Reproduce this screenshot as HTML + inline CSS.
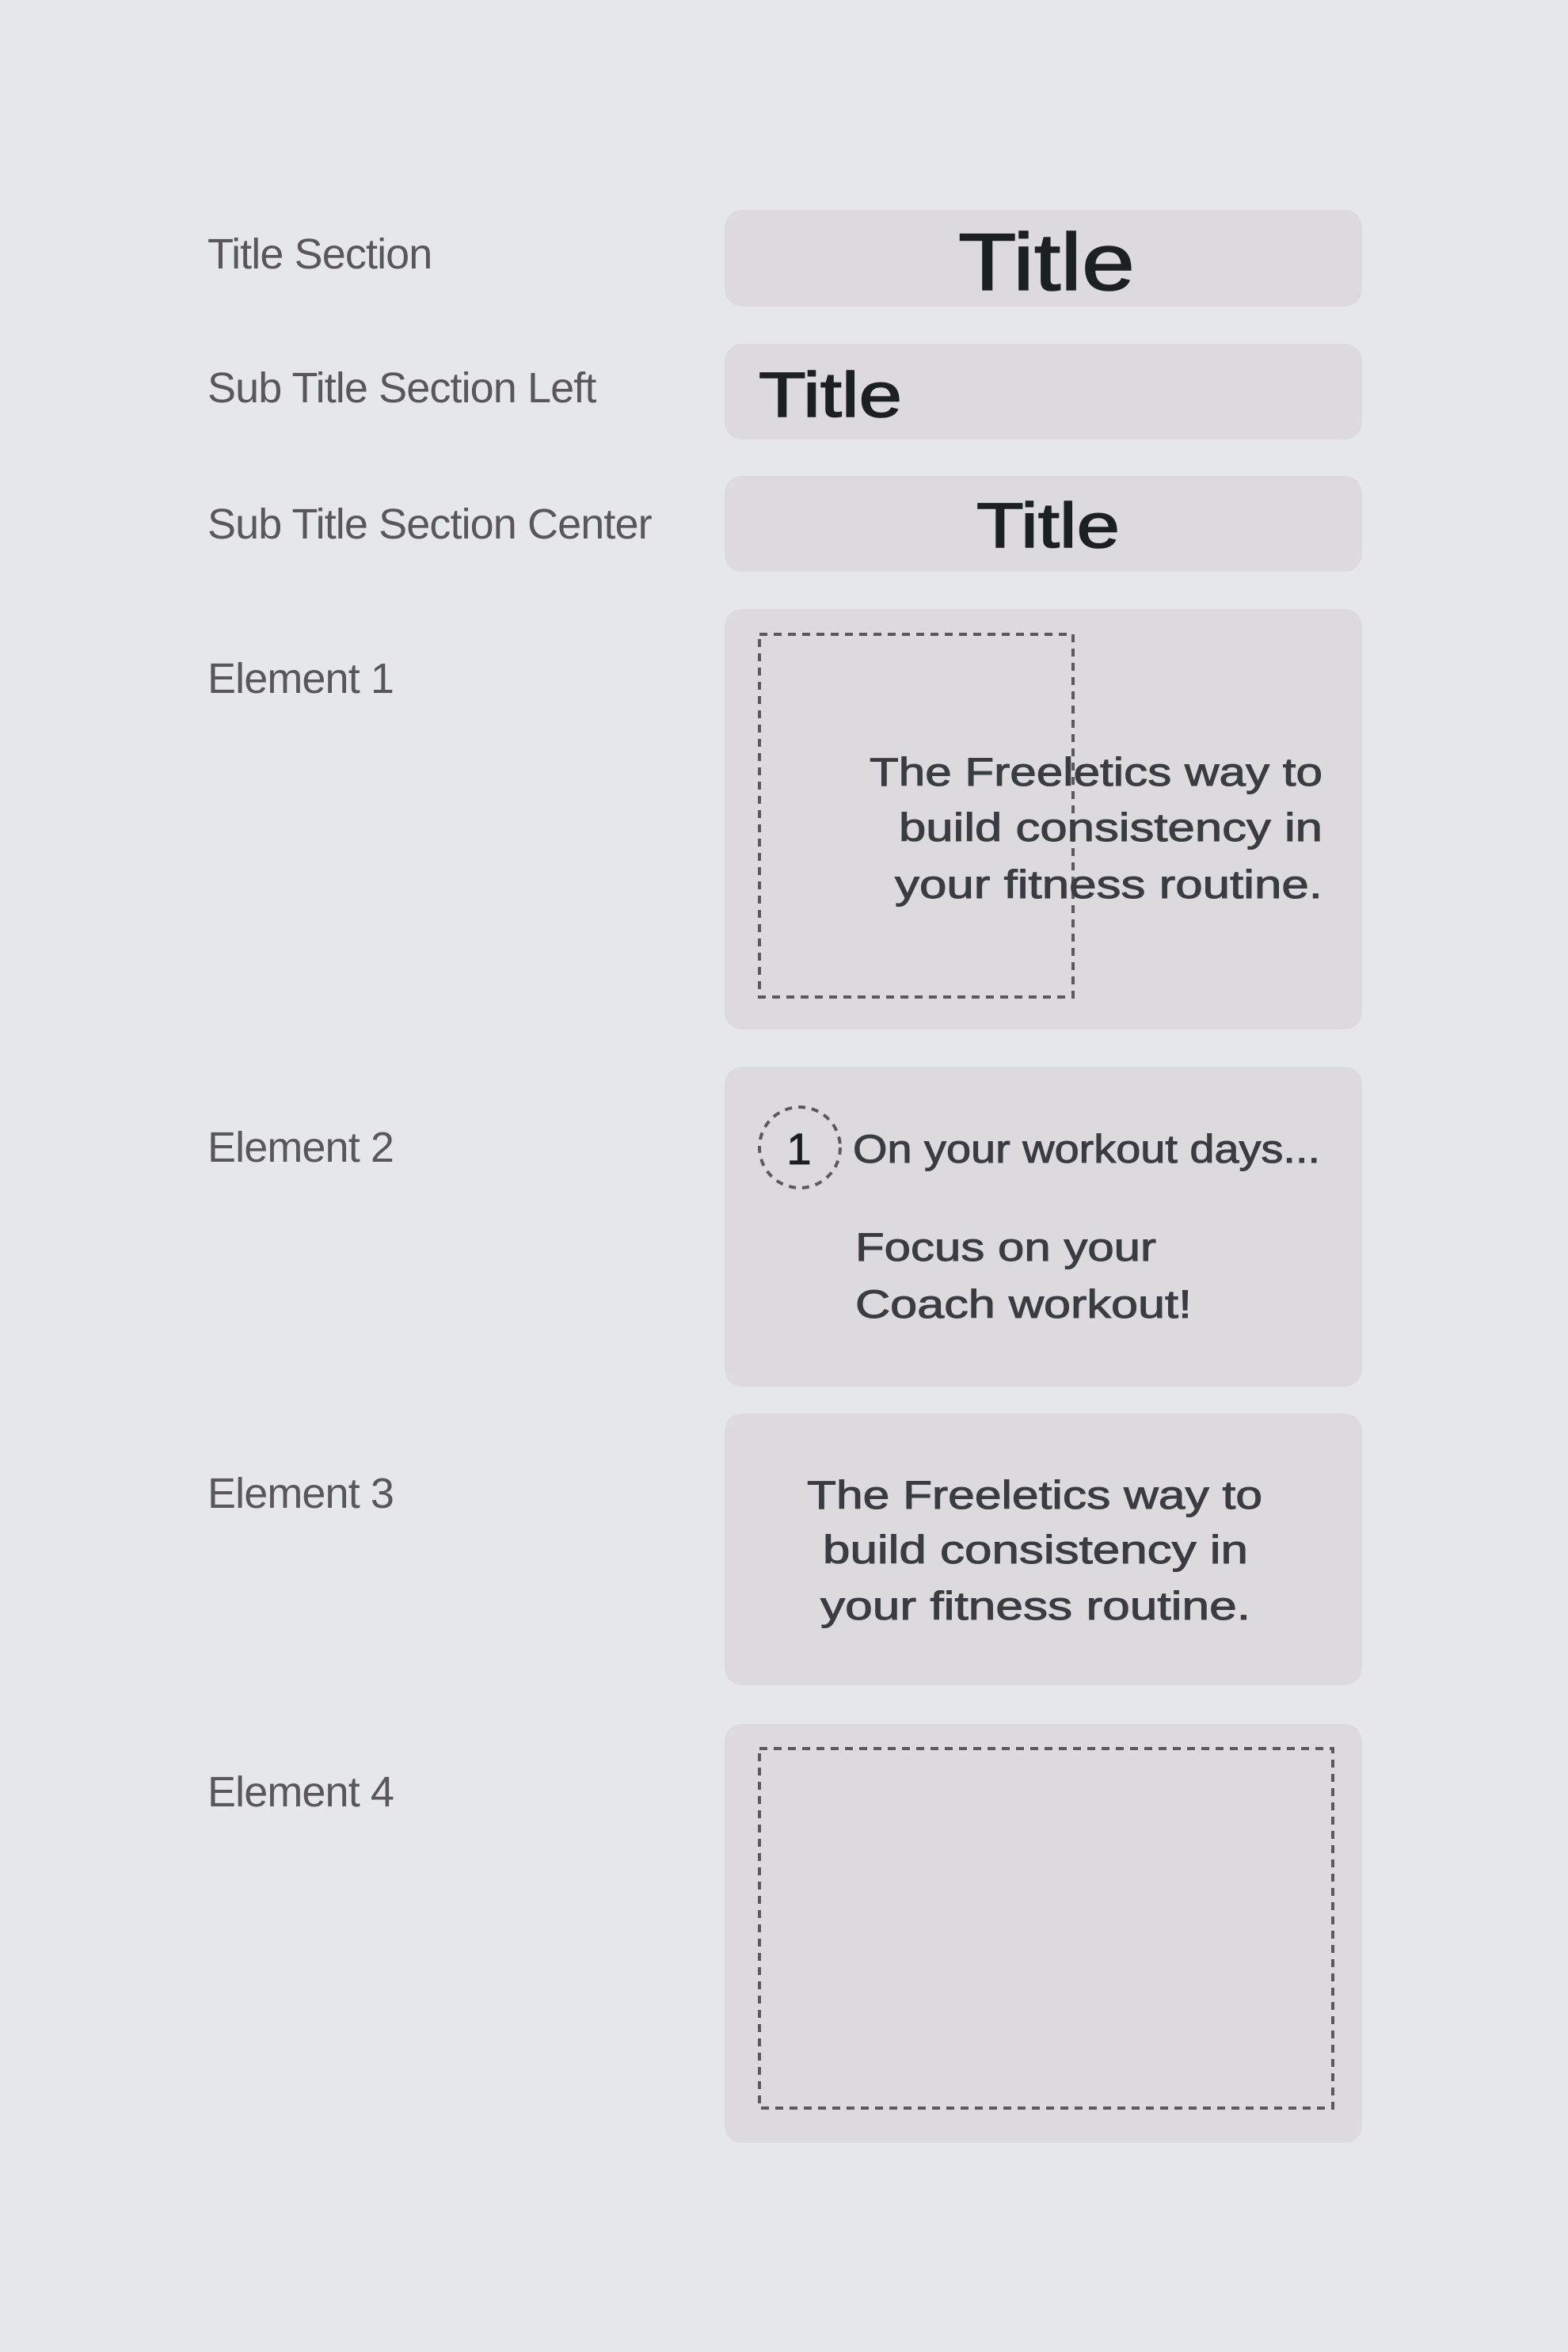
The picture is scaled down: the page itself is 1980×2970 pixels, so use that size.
<!DOCTYPE html>
<html><head><meta charset="utf-8"><style>
html,body{margin:0;padding:0;background:#e6e7e9;}
svg{display:block}
.lab{font-family:"Liberation Sans",sans-serif;font-size:54px;fill:#5a575a;letter-spacing:-0.9px}
.t{font-family:"Liberation Sans",sans-serif;fill:#1c2021;stroke:#1c2021;stroke-width:1.6}
.b{font-family:"Liberation Sans",sans-serif;font-size:50px;fill:#3a3d3f;stroke:#3a3d3f;stroke-width:1}
</style></head><body>
<svg width="1980" height="2970" viewBox="0 0 1980 2970" xmlns="http://www.w3.org/2000/svg">
<rect width="1980" height="2970" fill="#e6e7e9"/>
<g fill="#dcdadd">
<rect x="915" y="265" width="805" height="122" rx="22"/>
<rect x="915" y="434" width="805" height="121" rx="22"/>
<rect x="915" y="601" width="805" height="121" rx="22"/>
<rect x="915" y="769" width="805" height="531" rx="22"/>
<rect x="915" y="1347" width="805" height="404" rx="22"/>
<rect x="915" y="1785" width="805" height="343" rx="22"/>
<rect x="915" y="2177" width="805" height="529" rx="22"/>
</g>
<text class="lab" x="262" y="339">Title Section</text>
<text class="lab" x="262" y="508">Sub Title Section Left</text>
<text class="lab" x="262" y="680">Sub Title Section Center</text>
<text class="lab" x="262" y="875">Element 1</text>
<text class="lab" x="262" y="1467">Element 2</text>
<text class="lab" x="262" y="1904">Element 3</text>
<text class="lab" x="262" y="2281">Element 4</text>

<text class="t" x="1210" y="366" font-size="102" textLength="223" lengthAdjust="spacingAndGlyphs">Title</text>
<text class="t" x="958" y="526" font-size="80" textLength="181" lengthAdjust="spacingAndGlyphs">Title</text>
<text class="t" x="1233" y="691" font-size="80" textLength="181" lengthAdjust="spacingAndGlyphs">Title</text>

<rect x="959" y="801" width="396" height="458" fill="none" stroke="#5a5a5c" stroke-width="4" stroke-dasharray="10 8"/>
<text class="b" x="1098" y="992" textLength="572" lengthAdjust="spacingAndGlyphs">The Freeletics way to</text>
<text class="b" x="1135" y="1062" textLength="535" lengthAdjust="spacingAndGlyphs">build consistency in</text>
<text class="b" x="1130" y="1134" textLength="540" lengthAdjust="spacingAndGlyphs">your fitness routine.</text>

<circle cx="1010" cy="1449" r="51" fill="none" stroke="#5a5a5c" stroke-width="4" stroke-dasharray="9 8"/>
<text x="1009" y="1470" text-anchor="middle" font-family="Liberation Sans,sans-serif" font-size="56" fill="#1c2021" stroke="#1c2021" stroke-width="1">1</text>
<text class="b" x="1077" y="1468" font-size="47" textLength="590" lengthAdjust="spacingAndGlyphs">On your workout days...</text>
<text class="b" x="1080" y="1592" font-size="52" textLength="380" lengthAdjust="spacingAndGlyphs">Focus on your</text>
<text class="b" x="1080" y="1664" font-size="52" textLength="425" lengthAdjust="spacingAndGlyphs">Coach workout!</text>

<text class="b" x="1019" y="1905" textLength="575" lengthAdjust="spacingAndGlyphs">The Freeletics way to</text>
<text class="b" x="1039" y="1974" textLength="537" lengthAdjust="spacingAndGlyphs">build consistency in</text>
<text class="b" x="1036" y="2045" textLength="543" lengthAdjust="spacingAndGlyphs">your fitness routine.</text>

<rect x="959" y="2208" width="724" height="454" fill="none" stroke="#5a5a5c" stroke-width="4" stroke-dasharray="10 8"/>
</svg>
</body></html>
